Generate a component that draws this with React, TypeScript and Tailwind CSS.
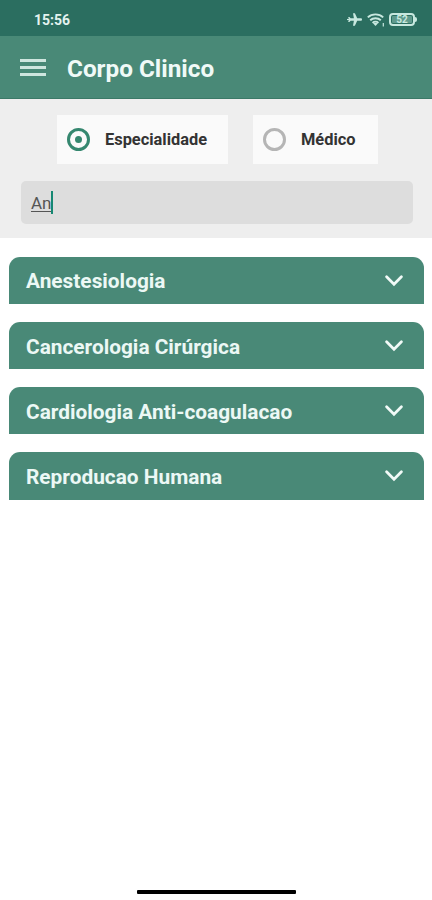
const specialties = [
  "Anestesiologia",
  "Cancerologia Cirúrgica",
  "Cardiologia Anti-coagulacao",
  "Reproducao Humana",
];

function StatusBar() {
  return (
    <div className="h-9 bg-[#2b6e60] flex items-center justify-between pl-[34px] pr-[15px] pt-[3px]">
      <span className="text-[14px] leading-none font-bold text-[#e3f3ef]">15:56</span>
      <div className="flex items-center text-[#c8e8df]">
        {/* Airplane mode */}
        <svg className="w-[15px] h-[13px]" viewBox="0 0 15 13" fill="currentColor">
          <path d="M15 6.500c0-.8-.5-1.300-1.200-1.300H10.200L7.900.3H6l.9 4.900H3.600L2.400 4H1.100l.8 1.700L0 6v1l1.900.3L1.100 9h1.300l1.200-1.200h3.300L6 12.700h1.900l2.300-4.900h3.600c.7 0 1.200-.5 1.200-1.300z" />
        </svg>
        {/* Wifi */}
        <svg className="w-[18px] h-[14px] ml-[5px]" viewBox="0 0 18 14" fill="none" stroke="currentColor">
          <path strokeWidth={1.9} d="M.8 4.400c4.200-4 11.200-4 15.400 0M3.200 7.300c2.900-2.800 7.700-2.800 10.600 0M5.600 10c1.600-1.600 4.200-1.600 5.800 0" />
          <path fill="currentColor" stroke="none" d="M6.200 10.400c1.200-1 3.400-1 4.600 0l-2.300 2.500z" />
          <path strokeWidth={1.2} d="M16.300 10v3.500" />
        </svg>
        {/* Battery */}
        <div className="ml-1 flex items-center">
          <div className="w-[26px] h-[13px] rounded-[4px] border-2 border-[#c8e8df] p-px">
            <div className="h-full rounded-[1px] bg-[#5f9a8d] flex items-center justify-center text-[10px] leading-none font-bold">
              52
            </div>
          </div>
          <div className="w-[2px] h-[5px] rounded-r-sm bg-[#c8e8df]" />
        </div>
      </div>
    </div>
  );
}

function RadioOption({ label, checked }: { label: string; checked?: boolean }) {
  return (
    <button
      className={`h-[49px] bg-[#fafafa] flex items-center pl-[10px] text-left ${checked ? "w-[171px]" : "w-[125px]"}`}
    >
      <span
        className={`w-[23px] h-[23px] -mt-px rounded-full border-[3px] flex items-center justify-center ${
          checked ? "border-[#35876f]" : "border-[#b5b5b5]"
        }`}
      >
        {checked && <span className="w-[7px] h-[7px] rounded-full bg-[#35876f]" />}
      </span>
      <span className="ml-[15px] mt-[2px] text-[16.400px] leading-none font-bold text-[#333333]">{label}</span>
    </button>
  );
}

export default function App() {
  return (
    <div className="w-[432px] h-[900px] bg-white flex flex-col overflow-hidden font-['Roboto',sans-serif]">
      <StatusBar />

      {/* Header */}
      <header className="h-[63px] bg-[#498977] border-b border-[#3b7967] flex items-center pl-5">
        <button className="flex flex-col gap-[4px]">
          <span className="w-[26px] h-[3px] bg-[#cfe6df]" />
          <span className="w-[26px] h-[3px] bg-[#cfe6df]" />
          <span className="w-[26px] h-[3px] bg-[#cfe6df]" />
        </button>
        <h1 className="ml-[21px] mt-[4px] text-[24.300px] leading-none font-bold text-[#f0faf7]">Corpo Clinico</h1>
      </header>

      {/* Search filters */}
      <section className="h-[139px] bg-[#eeeeee] pt-4 px-[21px]">
        <div className="flex gap-[25px] pl-[36px]">
          <RadioOption label="Especialidade" checked />
          <RadioOption label="Médico" />
        </div>
        <div className="mt-[17px] w-[392px] h-[43px] rounded-[5px] bg-[#dddddd] flex items-center pl-[10px]">
          <span className="mt-[2px] text-[17px] leading-none text-[#555555] underline underline-offset-2">An</span>
          <span className="w-[2px] h-[23px] bg-[#168873]" />
        </div>
      </section>

      {/* Specialty list */}
      <main className="flex-1 pt-[18.500px] pl-[9px] pr-2 flex flex-col gap-[17.700px]">
        {specialties.map((name) => (
          <button
            key={name}
            className="h-[47.500px] shrink-0 rounded-t-[11px] bg-[#498977] flex items-center justify-between pl-[17px] pr-[21px]"
          >
            <span className="mt-[3px] text-[20.850px] leading-none font-bold text-[#ecf8f5]">{name}</span>
            <svg className="w-[18px] h-[12px] mt-px" viewBox="0 0 18 12" fill="none" stroke="#f1faf7">
              <path strokeWidth={2.700} strokeLinecap="round" d="M1.600 1.700L9 9.300l7.400-7.600" />
            </svg>
          </button>
        ))}
      </main>

      {/* Home indicator */}
      <div className="w-[159px] h-[4px] mb-[6px] ml-[137px] rounded-[1px] bg-black" />
    </div>
  );
}
